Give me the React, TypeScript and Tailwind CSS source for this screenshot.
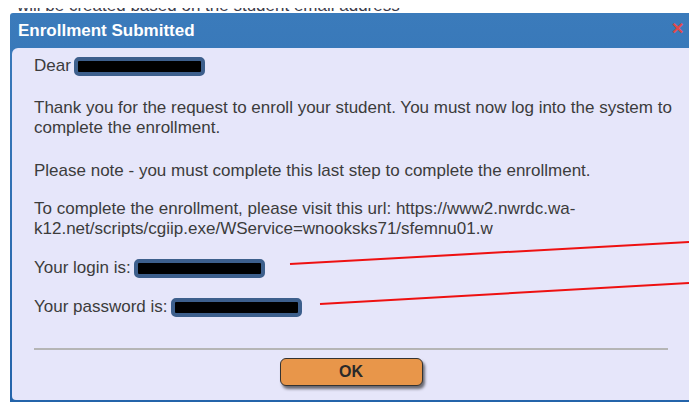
import React from "react";

function Redacted({ width }: { width: number }) {
  return (
    <span
      className="inline-block h-[19px] rounded-[5px] border-[4px] border-[#3d5f8c] bg-black"
      style={{ width }}
    />
  );
}

export default function App() {
  return (
    <div className="relative w-[689px] h-[402px] overflow-hidden bg-white font-['Liberation_Sans',Arial,sans-serif]">
      {/* page text peeking above the dialog */}
      <div className="h-[13px] pt-[8px]">
        <div className="h-[5px] overflow-hidden pl-[17px]">
          <p className="-translate-y-[12px] text-[17px] leading-[20px] text-[#3b3b4a] whitespace-nowrap">
            will be created based on the student email address
          </p>
        </div>
      </div>

      <div className="ml-[10px] w-[690px] h-[389px] rounded-tl-[3px] bg-gradient-to-b from-[#3b7bbb] to-[#2464aa] flex flex-col">
        <div className="h-[35px] flex items-center justify-between pl-[8px] pr-[16px]">
          <h1 className="text-[17px] font-bold text-white">Enrollment Submitted</h1>
          <span className="text-[#e0494a] text-[16px] font-bold leading-none mb-[3px]">✕</span>
        </div>

        <div className="ml-[2px] mr-[2px] flex-1 mb-[2px] rounded-t-[6px] rounded-bl-[4px] bg-[#e6e6fa] pl-[22px] pt-[8px] text-[17px] leading-[20px] text-[#3c3c3c]">
          <p className="flex items-center gap-[3px]">
            Dear <Redacted width={131} />
          </p>
          <p className="mt-[22px] w-[640px]">
            Thank you for the request to enroll your student. You must now log into the system to
            complete the enrollment.
          </p>
          <p className="mt-[23px]">
            Please note - you must complete this last step to complete the enrollment.
          </p>
          <p className="mt-[18px] w-[640px]">
            To complete the enrollment, please visit this url: https://www2.nwrdc.wa-k12.net/scripts/cgiip.exe/WService=wnooksks71/sfemnu01.w
          </p>
          <p className="mt-[19px] flex items-center gap-[3px]">
            Your login is: <Redacted width={131} />
          </p>
          <p className="mt-[19px] flex items-center gap-[3px]">
            Your password is: <Redacted width={131} />
          </p>

          <div className="mt-[31px] w-[634px] h-[2px] bg-[#b5b5b5]" />

          <div className="w-[634px] flex justify-center mt-[8px]">
            <button className="w-[143px] h-[28px] rounded-[6px] border border-[#333] bg-[#e8964a] text-[16px] font-bold text-[#2a2a2a] shadow-[2px_3px_3px_rgba(0,0,0,0.55)]">
              OK
            </button>
          </div>
        </div>
      </div>

      {/* annotation lines */}
      <svg className="absolute inset-0 pointer-events-none" width="689" height="402">
        <line x1="290" y1="264" x2="689" y2="242" stroke="#ee1111" strokeWidth="2" />
        <line x1="320" y1="304" x2="689" y2="283" stroke="#ee1111" strokeWidth="2" />
      </svg>
    </div>
  );
}
